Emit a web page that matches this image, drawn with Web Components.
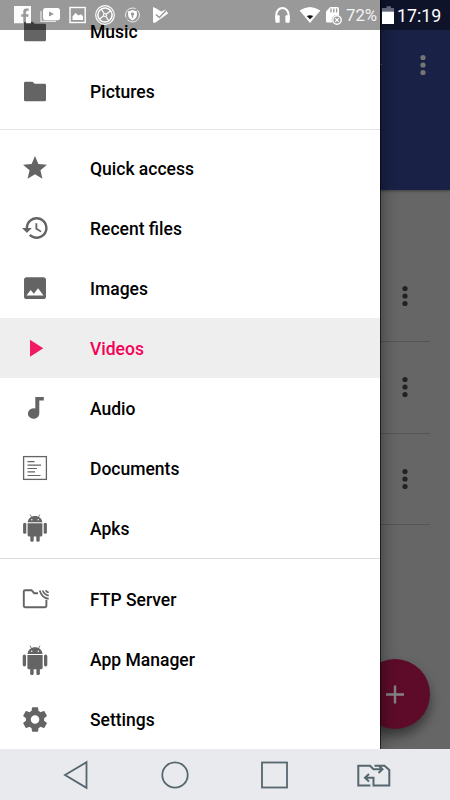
<!DOCTYPE html>
<html lang="en">
<head>
<meta charset="utf-8">
<title>Files</title>
<style>
html,body{margin:0;height:100%;overflow:hidden}
body{font-family:Roboto,"Liberation Sans",sans-serif;background:#666}
</style>
</head>
<body>
<phone-screen>
  <status-bar slot="status" battery="72%" time="17:19"></status-bar>
  <file-page slot="page"></file-page>
  <nav-drawer slot="drawer">
    <drawer-group>
      <drawer-item icon="folder">Music</drawer-item>
      <drawer-item icon="folder">Pictures</drawer-item>
    </drawer-group>
    <drawer-group>
      <drawer-item icon="star">Quick access</drawer-item>
      <drawer-item icon="recent">Recent files</drawer-item>
      <drawer-item icon="image">Images</drawer-item>
      <drawer-item icon="play" selected>Videos</drawer-item>
      <drawer-item icon="note">Audio</drawer-item>
      <drawer-item icon="doc">Documents</drawer-item>
      <drawer-item icon="android">Apks</drawer-item>
    </drawer-group>
    <drawer-group>
      <drawer-item icon="ftp">FTP Server</drawer-item>
      <drawer-item icon="androidTall">App Manager</drawer-item>
      <drawer-item icon="gear">Settings</drawer-item>
    </drawer-group>
  </nav-drawer>
  <system-nav slot="nav"></system-nav>
</phone-screen>
<script>
const robot = `
 <path d="M27.7 27.8C28.2 23.9 31.2 21.6 35 21.6S41.8 23.9 42.3 27.8Z"/>
 <path d="M31.8 23l-1.6-2.9M38.2 23l1.6-2.9" stroke="currentColor" stroke-width=".8"/>
 <circle cx="31.8" cy="25.2" r=".7" fill="#fff"/><circle cx="38.2" cy="25.2" r=".7" fill="#fff"/>
 <path d="M27.6 28.7h14.8v11.9q0 1.3-1.3 1.3H28.9q-1.3 0-1.3-1.3Z"/>
 <rect x="23.1" y="28.3" width="3.2" height="11" rx="1.5"/><rect x="43.7" y="28.3" width="3.2" height="11" rx="1.5"/>
 <rect x="30.3" y="38" width="3.4" height="9.3" rx="1.5"/><rect x="36.3" y="38" width="3.4" height="9.3" rx="1.5"/>`;
const ICONS = {
  folder:`<path d="M25.5 20.7h7l2.300 2H44.7q1.300 0 1.300 1.300V38.7q0 1.500-1.400 1.500H25.4q-1.400 0-1.400-1.500V22.1q0-1.400 1.500-1.400Z"/>`,
  star:`<path transform="translate(20.6 15.6) scale(1.2)" d="M12 17.27L18.18 21l-1.64-7.03L22 9.24l-7.19-.61L12 2 9.19 8.63 2 9.24l5.46 4.73L5.82 21z"/>`,
  recent:`<path transform="translate(20.8 15.4) scale(1.22)" d="M13 3c-4.97 0-9 4.03-9 9H1l3.89 3.89.07.14L9 12H6c0-3.87 3.13-7 7-7s7 3.13 7 7-3.13 7-7 7c-1.93 0-3.68-.79-4.94-2.06l-1.42 1.42C8.27 19.99 10.51 21 13 21c4.97 0 9-4.03 9-9s-4.03-9-9-9zm-1 5v5l4.28 2.54.72-1.21-3.5-2.08V8H12z"/>`,
  image:`<path transform="translate(20.36 15.5) scale(1.22)" d="M21 19V5c0-1.1-.9-2-2-2H5c-1.1 0-2 .9-2 2v14c0 1.100.9 2 2 2h14c1.100 0 2-.9 2-2zM8.500 13.500l2.500 3.010L14.500 12l4.500 6H5l3.500-4.500z"/>`,
  play:`<path d="M30 21.700v17L43.300 30.200Z"/>`,
  note:`<path d="M35.300 19h8.500v3.400h-4.500v13.400a5.700 5.200 0 1 1-4-5.200Z"/>`,
  doc:`<rect x="23.600" y="18.600" width="22.800" height="22.800" fill="none" stroke="currentColor" stroke-width="1.300"/><path d="M27.500 23.700h7M27.500 27.200h13.500M27.500 30.500h9.500M27.500 33.800h7.500M27.500 37.500h13" stroke="currentColor" stroke-width="1.200"/>`,
  android:`<g transform="translate(0 -3.500)">${robot}</g>`,
  androidTall:`<g transform="translate(-1.100 -5) scale(1.032 1.080)">${robot}</g>`,
  ftp:`<g fill="none" stroke="currentColor" stroke-width="1.900"><path d="M38 24.200h-3.800l-2.700-3H25q-1.200 0-1.200 1.200v14.600q0 1.200 1.200 1.200h20q1.400 0 1.400-1.400v-6"/><path stroke-width="1.700" d="M39.700 21.500q2 7.300 9 8.300M42.700 21.500q1.500 4.300 6 5.100M45.700 21.400q.8 1.700 3 2.100"/></g>`,
  gear:`<path transform="translate(20.400 15.800) scale(1.220)" d="M19.430 12.980c.040-.320.070-.640.070-.980s-.030-.660-.070-.980l2.110-1.650c.190-.150.240-.420.120-.640l-2-3.460c-.120-.220-.390-.300-.610-.220l-2.490 1c-.520-.400-1.080-.730-1.690-.980l-.380-2.650C14.460 2.180 14.250 2 14 2h-4c-.250 0-.460.180-.490.420l-.380 2.650c-.610.250-1.170.590-1.690.980l-2.490-1c-.230-.090-.490 0-.610.220l-2 3.460c-.130.220-.070.490.120.640l2.110 1.650c-.040.320-.070.650-.070.980s.030.660.070.980l-2.110 1.650c-.190.150-.240.420-.120.640l2 3.460c.120.220.390.300.610.220l2.490-1c.520.400 1.080.730 1.690.980l.380 2.650c.030.240.240.420.490.420h4c.250 0 .460-.180.490-.420l.380-2.650c.610-.250 1.170-.590 1.690-.980l2.490 1c.230.090.490 0 .610-.220l2-3.460c.120-.220.070-.490-.120-.640l-2.110-1.650zM12 15.500c-1.930 0-3.500-1.570-3.500-3.500s1.570-3.500 3.500-3.500 3.500 1.570 3.500 3.500-1.570 3.500-3.500 3.500z"/>`
};
function define(name, html){
  customElements.define(name, class extends HTMLElement{
    constructor(){
      super();
      this.attachShadow({mode:'open'}).innerHTML = typeof html === 'function' ? html(this) : html;
    }
  });
}
define('phone-screen', `<style>
:host{display:grid;grid-template:749px 51px / 380px 70px;width:450px;height:800px;overflow:hidden;background:#666}
::slotted([slot=page]){grid-area:1/1/2/3}
::slotted([slot=drawer]){grid-area:1/1/2/2;z-index:1}
::slotted([slot=status]){grid-area:1/1/2/3;z-index:2}
::slotted([slot=nav]){grid-area:2/1/3/3;z-index:2}
</style><slot name="page"></slot><slot name="drawer"></slot><slot name="status"></slot><slot name="nav"></slot>`);

define('nav-drawer', `<style>
:host{display:block;box-sizing:border-box;height:749px;padding-top:1px;background:#fff;box-shadow:1px 0 0 #0009,2px 0 16px #0006}
</style><slot></slot>`);

define('drawer-group', `<style>
:host{display:flex;flex-direction:column;box-sizing:border-box}
:host(:nth-child(1)){height:128px}
:host(:nth-child(2)){height:429px;border-top:1px solid #e4e4e4;padding-top:8px}
:host(:nth-child(3)){border-top:1px solid #dcdcdc;padding-top:10px}
</style><slot></slot>`);

define('drawer-item', el => `<style>
:host{display:flex;align-items:center;height:60px;flex:none;color:#000;font-size:17.500px;font-weight:500;line-height:22px}
:host([selected]){background:#eee;color:#f50057}
svg{width:60px;height:60px;flex:none;color:#646464;fill:currentColor}
:host([selected]) svg{color:#f01b62}
span{padding:2px 0 0 30px;white-space:nowrap}
</style><svg viewBox="0 0 60 60">${ICONS[el.getAttribute('icon')]}</svg><span><slot></slot></span>`);

define('more-dots', `<style>
:host{display:block;width:6px;color:#222}svg{display:block;fill:currentColor}
</style><svg width="6" height="22" viewBox="0 0 6 22"><circle cx="3" cy="3.500" r="2.600"/><circle cx="3" cy="11" r="2.600"/><circle cx="3" cy="18.500" r="2.600"/></svg>`);

define('file-page', `<style>
:host{display:flex;flex-direction:column;position:relative;background:#666;overflow:hidden}
header{box-sizing:border-box;height:190px;flex:none;background:#1a2147;padding:54px 24.500px 0 380px;display:flex;justify-content:space-between;align-items:flex-start;box-shadow:0 1px 3px #0006}
header more-dots{color:#757575}
header i{width:2px;height:1px;background:#555b75;margin-top:10px}
.list{padding:61px 20px 0 0}
.row{display:flex;align-items:center;justify-content:flex-end;height:91.300px;box-sizing:border-box;padding-right:22px;border-bottom:1px solid #555}
.fab{position:absolute;left:360px;top:659px;width:70px;height:70px;border-radius:50%;background:#5d0b29;box-shadow:0 7px 12px #0007}
.fab svg{display:block}
</style><header><i></i><more-dots></more-dots></header>
<div class="list"><div class="row"><more-dots></more-dots></div><div class="row"><more-dots></more-dots></div><div class="row"><more-dots></more-dots></div></div>
<div class="fab"><svg width="70" height="70"><path d="M26 35.500h18M35 26.500v18" stroke="#848484" stroke-width="2.400"/></svg></div>`);

define('status-bar', el => `<style>
:host{display:flex;height:30px;background:#0006;color:#fff;font-size:17.800px;line-height:31px}
svg{flex:none;display:block}
.pct{width:34px;margin-left:-34px;white-space:nowrap;color:#f4f4f4;font-size:16.800px}
.time{margin-left:-1px;white-space:nowrap}
</style>
<svg width="380" height="30" fill="#fff">
<path fill-rule="evenodd" d="M14 6h17v17.300h-5.100v-6.500h2.500v-2.500h-2.500v-2q0-1.500 1.300-1.500h1.400V8.400h-2.300q-3 0-3 3.200v2.700h-2v2.500h2v6.500H14Z" opacity=".96"/>
<path d="M41 11v10.300h15" fill="none" stroke="#e2e2e2" stroke-width="1.300"/>
<rect x="43" y="8" width="17" height="12.300" rx="2.500"/><path d="M49 11.500v5l5-2.500Z" fill="#999"/>
<rect x="70" y="7.500" width="15.200" height="15" fill="none" stroke="#fff" stroke-width="1.400"/><path d="M72.500 20v-3.500l3-3.500 3 2.500 2.500-1.300 2 2V20Z"/>
<g fill="none" stroke="#fff"><circle cx="105" cy="15" r="9.300" stroke-width="1.200"/><circle cx="105" cy="15" r="7.100" stroke-width="1.500"/><path d="m101.500 9.500 2.700 4m6.300-2.500-4 3m-7 5 4-3m5 4.500-2.500-4" stroke-width="1.300"/><circle cx="105" cy="15" r="1.500" stroke-width="1.200"/><circle cx="132.500" cy="15" r="7" stroke-width=".8" stroke-dasharray="17 2"/></g>
<path d="M132.500 10q3 1.400 4.400 1.100v4q0 3.400-4.400 5.300-4.400-1.900-4.400-5.300v-4q1.400.3 4.400-1.100Z"/><path d="M132.500 12.600a1.500 1.500 0 0 1 .7 2.900v2.200h-1.400v-2.200a1.500 1.500 0 0 1 .7-2.900Z" fill="#999"/>
<path d="M153 7q4.500 1.600 8 4.500l5-2 2 4-12.500 9.100q-2.500.8-2.500-.8Z"/><path d="m156 14.500 3.300 3 7.500-7.700" fill="none" stroke="#999" stroke-width="1.500"/>
<path d="M276.300 20v-5a6.100 7 0 0 1 12.300 0v5" fill="none" stroke="#fff" stroke-width="2"/><rect x="275.400" y="15.300" width="4.300" height="7.400" rx="1"/><rect x="285.400" y="15.300" width="4.300" height="7.400" rx="1"/>
<path d="M299.600 10.600Q310 3.400 320.400 10.600L310 23Z"/><path d="M306.700 16q3.300-1.700 6.600 0L310 19.300Z" fill="#111"/>
<path d="M330.200 7h7.300q1.500 0 1.500 1.500v12q0 2-1.500 2h-10q-1.500 0-1.500-1.500V11.500Z"/><path d="M331 8.500v4m2.800-4v4m2.800-4v4" stroke="#999" stroke-width="1.300"/>
<circle cx="337" cy="20" r="5.300" fill="#999"/><circle cx="337" cy="20" r="4.200" fill="none" stroke="#fff" stroke-width="1.400"/><path d="m335.200 18.200 3.600 3.600m0-3.600-3.600 3.600" stroke="#fff" stroke-width="1.200"/>
</svg><span class="pct">${el.getAttribute('battery')}</span>
<svg width="16" height="30" style="margin-left:2px"><path d="M2 8h2.500V6.300h4.500V8h3v4H0V8Z" fill="#62667b"/><rect x="0" y="11.700" width="12" height="12.300" fill="#fff"/></svg>
<span class="time">${el.getAttribute('time')}</span>`);

define('system-nav', `<style>
:host{display:flex;background:#e9eaee}
svg{display:block;fill:none;stroke:#56666f;stroke-width:1.800}
</style><svg width="450" height="51">
<path d="M65 26 86.500 13.200V38.800Z"/><circle cx="175" cy="26" r="12.700"/><rect x="262" y="13.500" width="25" height="25"/>
<path stroke-width="2" d="M370.400 36.500H358.300V16.700H370L373.500 20.300H382M378.500 16.500 382.500 20.300 378.500 24M374.500 16.700H384.500L389.300 21V36.500H373.500V28.800H365M369 25 365 28.800 369 32.500"/>
</svg>`);
</script>
</body>
</html>
